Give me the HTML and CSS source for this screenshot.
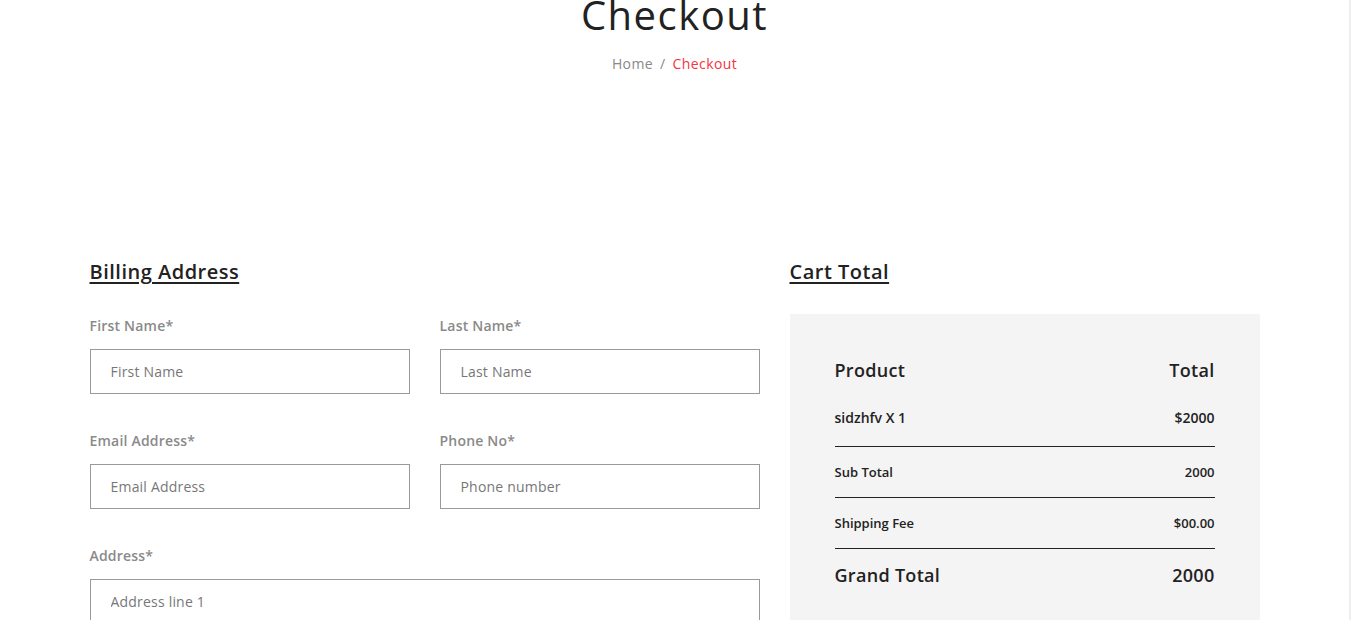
FILE: index.html
```html
<!DOCTYPE html>
<html lang="en">
<head>
<meta charset="utf-8">
<title>Checkout</title>
<link rel="stylesheet" href="styles.css">
</head>
<body>
<div class="page">
  <header class="page-title">
    <h1 class="title">Checkout</h1>
    <nav class="crumbs"><a class="crumb" href="#">Home</a><span class="sep">/</span><span class="crumb-active">Checkout</span></nav>
  </header>

  <main class="checkout">
    <section class="billing">
      <h2 class="section-head">Billing Address</h2>
      <div class="form-grid">
        <div class="field">
          <label class="label">First Name*</label>
          <input class="input" type="text" placeholder="First Name">
        </div>
        <div class="field">
          <label class="label">Last Name*</label>
          <input class="input" type="text" placeholder="Last Name">
        </div>
        <div class="field">
          <label class="label">Email Address*</label>
          <input class="input" type="text" placeholder="Email Address">
        </div>
        <div class="field">
          <label class="label">Phone No*</label>
          <input class="input" type="text" placeholder="Phone number">
        </div>
        <div class="field wide">
          <label class="label">Address*</label>
          <input class="input" type="text" placeholder="Address line 1">
        </div>
      </div>
    </section>

    <aside class="cart">
      <h2 class="section-head">Cart Total</h2>
      <div class="cart-box">
        <div class="row head"><span>Product</span><span>Total</span></div>
        <div class="row item"><span>sidzhfv X 1</span><span>$2000</span></div>
        <div class="row sub"><span>Sub Total</span><span>2000</span></div>
        <div class="row sub"><span>Shipping Fee</span><span>$00.00</span></div>
        <div class="row grand"><span>Grand Total</span><span>2000</span></div>
      </div>
    </aside>
  </main>
</div>
</body>
</html>
```

FILE: styles.css
```css
* { box-sizing: border-box; }

html, body {
  margin: 0;
  padding: 0;
  background: #fff;
}

body {
  font-family: "Open Sans", "Noto Sans", sans-serif;
  color: #222;
  border-right: 2px solid #eeeeee;
  height: 620px;
  overflow: hidden;
}

.page {
  width: 1170px;
  margin: 0 auto;
}

.page-title {
  text-align: center;
  margin-top: -15px;
}

.title {
  margin: 0;
  font-size: 40px;
  font-weight: 400;
  line-height: 60px;
  letter-spacing: 1.5px;
  color: #222;
}

.crumbs {
  margin-top: 8px;
  font-size: 14px;
  line-height: 22px;
  letter-spacing: 0.4px;
}

.crumb {
  color: #888;
  text-decoration: none;
}

.sep {
  color: #888;
  margin: 0 7px;
}

.crumb-active {
  color: #f5343f;
}

.checkout {
  display: flex;
  gap: 30px;
  margin-top: 183px;
}

.billing {
  width: 670px;
}

.cart {
  width: 470px;
}

.section-head {
  margin: 0;
  font-size: 20px;
  font-weight: 600;
  line-height: 28px;
  letter-spacing: 0.5px;
  text-decoration: underline;
  text-decoration-thickness: 2px;
  text-underline-offset: 3px;
  color: #222;
}

.form-grid {
  display: grid;
  grid-template-columns: 320px 320px;
  column-gap: 30px;
  row-gap: 36px;
  margin-top: 29px;
}

.field.wide {
  grid-column: 1 / 3;
}

.label {
  display: block;
  font-size: 14px;
  font-weight: 600;
  line-height: 21px;
  letter-spacing: 0.2px;
  color: #8a8a8a;
  margin-bottom: 13px;
}

.input {
  display: block;
  width: 100%;
  height: 45px;
  border: 1px solid #9a9a9a;
  border-radius: 0;
  padding: 0 20px;
  font-family: inherit;
  font-size: 14px;
  letter-spacing: 0.2px;
  color: #666;
  background: #fff;
  outline: none;
}

.input::placeholder {
  color: #777;
}

.cart-box {
  margin-top: 28px;
  background: #f4f4f4;
  padding: 45px 45px 60px;
}

.row {
  display: flex;
  justify-content: space-between;
  align-items: center;
}

.row.head {
  font-size: 18px;
  font-weight: 600;
  line-height: 22px;
  letter-spacing: 0.3px;
}

.row.item {
  font-size: 14px;
  font-weight: 600;
  line-height: 21px;
  padding: 26px 0 18px;
  border-bottom: 1px solid #222;
}

.row.sub {
  font-size: 13px;
  font-weight: 600;
  line-height: 20px;
  height: 51px;
  border-bottom: 1px solid #222;
}

.row.grand {
  font-size: 18px;
  font-weight: 600;
  line-height: 22px;
  letter-spacing: 0.3px;
  padding-top: 15px;
}
```
